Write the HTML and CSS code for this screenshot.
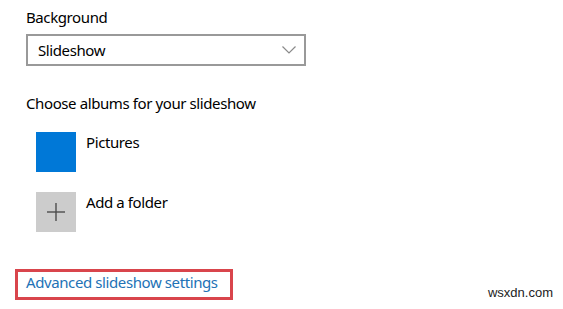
FILE: index.html
```html
<!DOCTYPE html>
<html>
<head>
  <title>Background</title>
  <link rel="stylesheet" href="styles.css">
</head>
<body>
  <div class="page">
    <div class="label">Background</div>
    <div class="select">
      <span>Slideshow</span>
      <svg class="chevron" width="14" height="8" viewBox="0 0 14 8">
        <polyline points="0.5,0.5 7,7 13.5,0.5" fill="none" stroke="#8a8a8a" stroke-width="1.2"/>
      </svg>
    </div>

    <div class="section-title">Choose albums for your slideshow</div>

    <div class="albums">
      <div class="album">
        <div class="tile tile-blue"></div>
        <div class="album-name">Pictures</div>
      </div>
      <div class="album">
        <div class="tile tile-add">
          <svg width="18" height="18" viewBox="0 0 18 18">
            <line x1="9" y1="0" x2="9" y2="18" stroke="#4c4c4c" stroke-width="1.4"/>
            <line x1="0" y1="9" x2="18" y2="9" stroke="#4c4c4c" stroke-width="1.4"/>
          </svg>
        </div>
        <div class="album-name">Add a folder</div>
      </div>
    </div>

    <a class="advanced" href="#">Advanced slideshow settings</a>
  </div>

  <div class="watermark">wsxdn.com</div>
</body>
</html>
```

FILE: styles.css
```css
body {
  margin: 0;
  font-family: "Noto Sans", "Open Sans", sans-serif;
  font-size: 15px;
  letter-spacing: -0.4px;
  color: #000;
  background: #fff;
}

.page {
  padding: 7px 0 0 26px;
}

.label {
  height: 20px;
  line-height: 20px;
  margin-bottom: 7px;
}

.select {
  width: 280px;
  height: 32px;
  box-sizing: border-box;
  border: 2px solid #999;
  padding: 0 8px 0 10px;
  display: flex;
  align-items: center;
  justify-content: space-between;
}

.section-title {
  margin-top: 27px;
  height: 20px;
  line-height: 20px;
}

.albums {
  margin-top: 19px;
  padding-left: 10px;
}

.album {
  display: flex;
  gap: 10px;
  height: 40px;
  margin-bottom: 20px;
}

.album-name {
  line-height: 20px;
  margin-top: 0;
}

.tile {
  width: 40px;
  height: 40px;
  display: flex;
  align-items: center;
  justify-content: center;
}

.tile-blue {
  background: #0078d7;
}

.tile-add {
  background: #cccccc;
}

.advanced {
  display: inline-block;
  margin-top: 17px;
  margin-left: -11px;
  width: 218px;
  height: 31px;
  box-sizing: border-box;
  border: 3px solid #d9454c;
  padding-left: 8px;
  line-height: 21px;
  color: #2272b6;
  text-decoration: none;
}

.watermark {
  position: absolute;
  right: 10px;
  bottom: 9px;
  font-family: "Liberation Sans", Arial, sans-serif;
  font-size: 13px;
  letter-spacing: 0;
  color: #222;
}
```
